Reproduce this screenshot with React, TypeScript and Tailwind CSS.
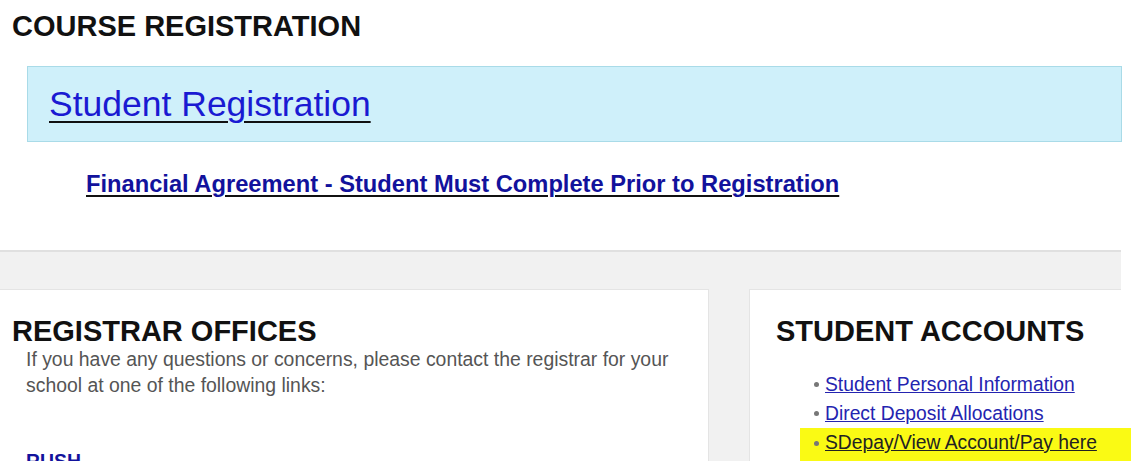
const accountLinks = [
  { label: "Student Personal Information", highlight: false },
  { label: "Direct Deposit Allocations", highlight: false },
  { label: "SDepay/View Account/Pay here", highlight: true },
];

const App = () => {
  return (
    <div className="w-[1131px] h-[461px] overflow-hidden bg-white font-['Liberation_Sans',Arial,sans-serif]">
      <div className="h-[250px]">
        <h1 className="pt-[10px] pl-[12px] text-[29px] leading-[32px] font-bold text-[#111]">
          COURSE REGISTRATION
        </h1>
        <div className="mt-[24px] ml-[27px] w-[1095px] h-[76px] flex items-center pl-[21px] bg-[#cff0fa] border border-[#a9dbe8]">
          <a
            href="#"
            className="text-[35.5px] leading-[40px] text-[#1a1ad2] underline decoration-[#111] decoration-2 underline-offset-[5px]"
          >
            Student Registration
          </a>
        </div>
        <div className="mt-[29px] pl-[86px]">
          <a
            href="#"
            className="text-[23.7px] leading-[26px] font-bold text-[#12129c] underline decoration-[#111] decoration-2 underline-offset-[3px]"
          >
            Financial Agreement - Student Must Complete Prior to Registration
          </a>
        </div>
      </div>

      <div className="w-[1121px] h-[39px] bg-[#f1f1f1] border-t-2 border-[#e0e0e0]" />

      <div className="flex w-[1121px] bg-[#f1f1f1] h-[200px]">
        <div className="w-[709px] bg-white border-t border-r border-[#e4e4e4] pl-[12px]">
          <h2 className="pt-[27px] text-[29px] leading-[28px] font-bold text-[#111]">
            REGISTRAR OFFICES
          </h2>
          <p className="pl-[14px] pt-[1px] text-[19.4px] leading-[26px] text-[#555]">
            If you have any questions or concerns, please contact the registrar for your
            <br />
            school at one of the following links:
          </p>
          <a
            href="#"
            className="block mt-[50px] pl-[14px] text-[19.4px] leading-[26px] font-bold text-[#12129c] underline"
          >
            RUSH
          </a>
        </div>

        <div className="w-[40px]" />

        <div className="flex-1 bg-white border-t border-l border-[#e4e4e4] pl-[26px]">
          <h2 className="pt-[27px] text-[29px] leading-[28px] font-bold text-[#111]">
            STUDENT ACCOUNTS
          </h2>
          <ul className="mt-[25px] -mr-[10px]">
            {accountLinks.map((item) => (
              <li
                key={item.label}
                className={
                  item.highlight
                    ? "ml-[24px] pl-[14px] pt-[1px] pb-[12px] bg-[#fafa14]"
                    : "pl-[38px]"
                }
              >
                <div className={item.highlight ? "flex items-center h-[28px]" : "flex items-center h-[29px]"}>
                  <span className="w-[5px] h-[5px] rounded-full bg-[#777] mr-[6px] shrink-0" />
                  <a
                    href="#"
                    className={
                      item.highlight
                        ? "text-[19.3px] leading-[24px] text-[#222] underline decoration-[#222]"
                        : "text-[19.3px] leading-[24px] text-[#2424b0] underline"
                    }
                  >
                    {item.label}
                  </a>
                </div>
              </li>
            ))}
          </ul>
        </div>
      </div>
    </div>
  );
};

export default App;
